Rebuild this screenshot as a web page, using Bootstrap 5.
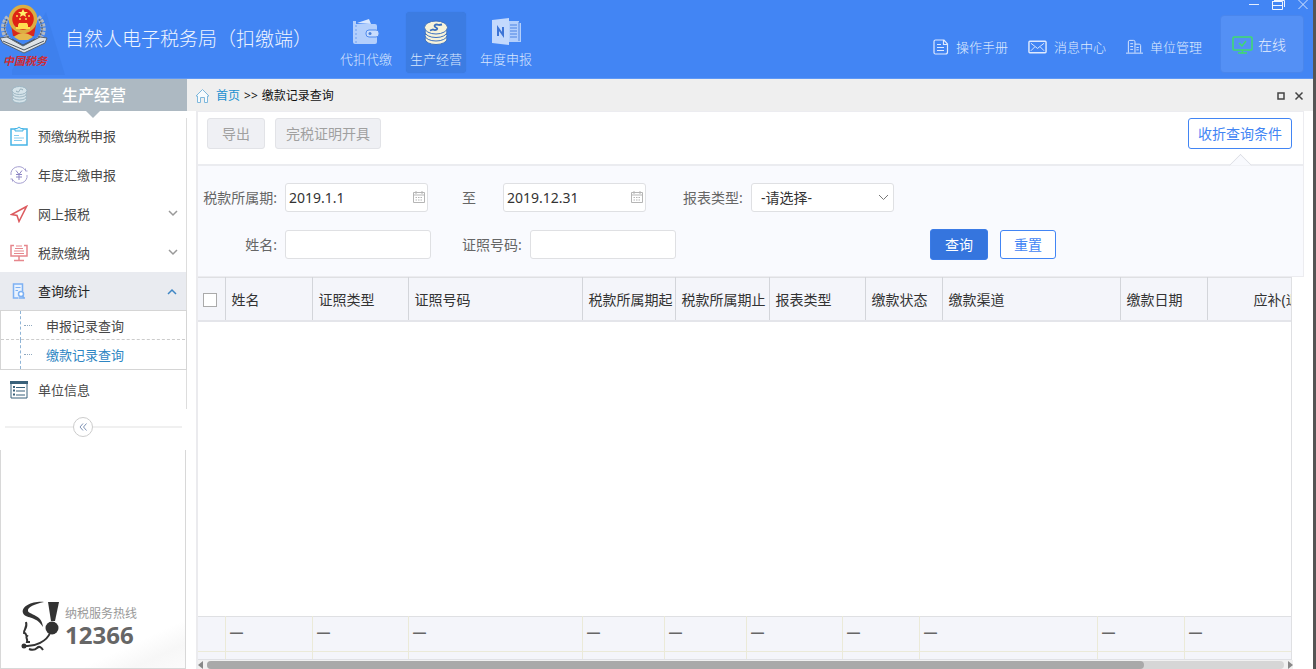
<!DOCTYPE html>
<html lang="zh-CN">
<head>
<meta charset="utf-8">
<meta name="viewport" content="width=device-width, initial-scale=1">
<title>自然人电子税务局（扣缴端）</title>
<link href="https://cdn.jsdelivr.net/npm/bootstrap@5.3.0/dist/css/bootstrap.min.css" rel="stylesheet">
<style>
  body { font-family: "Noto Sans", "Noto Sans CJK SC", sans-serif; font-size: 14px; line-height: 20px; color: #333; background: #fff; }
  a { text-decoration: none; color: inherit; }
  svg { display: block; flex-shrink: 0; }
  .app-frame { border-right: 3px solid #555; overflow: hidden; }

  /* top bar */
  .top-bar { height: 79px; background: #4285f4; color: #d5e4fd; position: relative; border-bottom: 1px solid #5e98f6; }
  .brand-mark { width: 65px; height: 78px; }
  .brand-title { font-size: 19px; line-height: 28px; font-weight: 300; width: 271px; color: #eef4ff; margin: 0; white-space: nowrap; }
  .module-nav { gap: 10px; padding-top: 6px; }
  .module-link { width: 60px; height: 61px; border-radius: 4px; font-size: 13px; font-weight: 300; padding-top: 5px; color: #d9e7fe; white-space: nowrap; }
  .module-link.active { background: #3c7ce2; box-shadow: 0 0 1px #3874d6; }
  .tool-nav { gap: 20px; padding-top: 15px; margin-right: 18px; }
  .tool-link { font-size: 13px; font-weight: 300; gap: 7px; color: #dfeafe; white-space: nowrap; }
  .status-btn { width: 84px; height: 58px; border: 1px solid #4a86ec; border-radius: 4px; background: #5490f5; color: #e6effe; font-size: 14px; font-weight: 300; gap: 5px; padding: 2px 0 0 11px; margin: 9px 9px 0 0; }
  .window-keys { position: absolute; top: 0; right: 4px; gap: 11px; }
  .bare-btn { border: 0; background: none; padding: 0; color: inherit; }

  /* side menu */
  .side-menu { width: 187px; flex-shrink: 0; }
  .side-head { height: 32px; background: #adb9c2; color: #fff; font-size: 16px; font-weight: 500; position: relative; padding-left: 11px; }
  .side-head::after { content: ""; position: absolute; left: 86px; top: 32px; border: 7px solid transparent; border-top-color: #adb9c2; border-bottom: 0; }
  .side-title { padding-right: 27px; }
  .side-list { padding-top: 5px; font-size: 13px; color: #484848; background: linear-gradient(#ddd, #ddd) right 0 top 7px / 1px 100% no-repeat; }
  .side-link { height: 39px; padding: 0 9px 0 10px; gap: 10px; }
  .side-link.active { background: #e9ebf0; color: #222; height: 38px; margin-right: 1px; }
  .sub-list { border: 1px solid #d5d5d5; height: 60px; padding-left: 19px; position: relative; }
  .sub-link { height: 29px; padding-left: 25px; border-left: 1px dashed #8fb4d6; position: relative; }
  .sub-link.active { color: #2e86c3; }
  .sub-link::before { content: ""; position: absolute; left: 3px; top: 14px; width: 8px; border-top: 1px dotted #8fa9c0; }
  .sub-list::after { content: ""; position: absolute; left: 0; right: 1px; top: 28px; border-top: 1px dashed #ccc; }
  .fold-row { height: 36px; padding: 0 5px; margin-bottom: 5px; }
  .fold-row hr { margin: 0; opacity: 1; border-top: 2px solid #f0f0f0; }
  .fold-lead { width: 68px; }
  .fold-btn { width: 20px; height: 20px; border: 1px solid #ccc; border-radius: 50%; background: #fff; padding: 0; color: #7f93b5; }
  .hotline-box { border: 1px solid #d8d8d8; border-top: 0; margin-right: 1px; padding: 0 0 15px 20px; background: linear-gradient(155deg, #fff 84%, #f7f7f7 92%, #fbfbfb 100%); }
  .hot-label { font-size: 12px; line-height: 16px; color: #999; }
  .hot-number { font-size: 24px; line-height: 26px; font-weight: 700; color: #666; font-family: "Noto Sans", sans-serif; }

  /* working area */
  .work-main { min-width: 0; }
  .tab-strip { height: 32px; background: #efefef; font-size: 12px; color: #111; padding: 2px 9px 0 8px; }
  .tab-strip a { color: #1b8fd0; }
  .crumbs { padding-left: 6px; }
  .work-pane { margin: 0 21px 0 9px; border-left: 2px solid #ebebee; }
  .pane-top { margin-right: -12px; border: 1px solid #ececf0; border-left: 0; }
  .action-bar { height: 54px; padding: 6px 11px 0 9px; gap: 10px; border-bottom: 2px solid #ebecf0; position: relative; }
  .action-bar::after { content: ""; position: absolute; right: 54px; bottom: -10px; width: 17px; height: 17px; background: #f9fafe; border: 1px solid #dcdde3; border-right: 0; border-bottom: 0; transform: rotate(45deg); clip-path: polygon(0 0, 100% 0, 0 100%); }
  .btn-app { height: 31px; padding: 0 18px; font-size: 14px; line-height: 20px; border-radius: 3px; margin: 0; }
  .btn-idle, .btn-idle:disabled { background: #eff0f4; border-color: #e2e3e7; color: #a0a0a0; opacity: 1; padding: 0 10px; min-width: 58px; }
  .btn-line { background: #fff; border-color: #4285f4; color: #4285f4; padding: 0 9px; }
  .btn-reset { height: 29px; width: 56px; padding: 0; }
  .btn-solid { background: #3575de; border-color: #3b7be6; color: #fff; width: 58px; padding: 0; }
  .query-area { background: #f9fafe; padding: 16px 0 16px; color: #666; }
  .query-row { height: 31px; white-space: nowrap; }
  .query-row + .query-row { margin-top: 16px; }
  .lead-label { width: 87px; padding-right: 8px; text-align: right; }
  .box-input { height: 29px; border: 1px solid #dfe0e3; border-radius: 3px; padding: 0 3px; font-size: 14px; color: #333; background-color: #fff; }
  .date-wrap { position: relative; width: 143px; }
  .date-wrap svg { position: absolute; right: 3px; top: 8px; }
  .name-input { width: 146px; }
  .till-label { width: 75px; padding-left: 34px; }
  .code-label { width: 99px; padding-left: 31px; }
  .kind-label { width: 105px; padding-left: 37px; }
  .kind-select { width: 143px; padding: 0 24px 0 9px; background-position: right 4px center; background-size: 11px 7px; background-image: url("data:image/svg+xml,%3Csvg xmlns='http://www.w3.org/2000/svg' viewBox='0 0 11 7'%3E%3Cpath d='M1 1L5.500 5.500L10 1' fill='none' stroke='%23777'/%3E%3C/svg%3E"); }
  .query-keys { margin-left: 254px; gap: 12px; }

  /* grid of records */
  .grid-clip { overflow: hidden; border-right: 1px solid #dfe0e3; }
  .grid-table { table-layout: fixed; width: 1141px; margin: 0; font-size: 14px; }
  .grid-table > :not(caption) > * > * { background: #f4f5fa; padding: 0 6px 0 6px; border: 0 solid #d3d5da; border-right-width: 1px; font-weight: 400; color: #333; vertical-align: middle; white-space: nowrap; box-shadow: none; }
  .grid-table > :not(caption) > * > :first-child { padding-left: 5px; }
  .head-table { border-top: 1px solid #dfe0e3; }
  .head-table > thead > tr > th { height: 43px; border-bottom: 2px solid #e4e5ea; padding-top: 2px; }
  .foot-table > tbody > tr > td { height: 35px; border-color: #ebead8; border-bottom-width: 1px; color: #666; padding: 0 0 5px 4px; font-weight: 700; }
  .foot-table > tbody > tr.thin-row > td { height: 8px; padding: 0; border-bottom-color: #e0e1e5; }
  .foot-table { border-top: 1px solid #dfe0e3; }
  .c27 { width: 27px; } .c77 { width: 77px; } .c82 { width: 82px; } .c87 { width: 87px; } .c93 { width: 93px; } .c94 { width: 94px; }
  .c96 { width: 96px; } .c174 { width: 174px; } .c178 { width: 178px; }
  .grid-check[type=checkbox] { width: 14px; height: 14px; margin: 0; border: 1px solid #aaa; border-radius: 0; display: block; }
  .grid-space { min-height: 80px; }
  .h-scroll { height: 9px; background: #f1f1f1; gap: 4px; margin-right: -1px; }
  .h-track { height: 8px; border-radius: 4px; background: #d6d6d6; }
  .h-thumb { height: 8px; border-radius: 4px; background: #a9a9a9; }
</style>
</head>
<body>
<div class="app-frame d-flex flex-column min-vh-100">
  <header class="top-bar d-flex align-items-center">
    <svg class="brand-mark" viewBox="0 0 65 78" role="img" aria-label="中国税务">
      <path d="M12 70L46 12L65 75H12Z" fill="#3e80ed"/>
      <g fill="none" stroke="#b4bac2" stroke-width="5" stroke-dasharray="3 1">
        <path d="M8 17C-1 28 4 40 18 45"/><path d="M38 17C48 28 43 40 29 45"/>
      </g>
      <g fill="none" stroke="#5c6670" stroke-width="1.500" stroke-dasharray="2 1"><path d="M7 19C1 30 7 38 16 43M39 19C46 30 40 38 31 43"/></g>
      <path d="M11 25L13 36H34L36 25Z" fill="#d8281c"/>
      <path d="M14 37Q23 29 33 37L28 40H19Z" fill="#e6b84c"/>
      <path d="M0 38L7 37L23 46L40 37L47 38L45 43L24 53L3 43Z" fill="#dfe3e7" stroke="#59636e"/>
      <path d="M3 41L24 50L44 41M12 39L23 45L35 39" fill="none" stroke="#4b555f"/>
      <circle cx="23" cy="19" r="12.500" fill="#de2214" stroke="#dcae42" stroke-width="3.500"/>
      <path d="M23 9L24.500 12H28L25.200 14L26.200 17L23 15.200L19.800 17L20.800 14L18 12H21.500Z" fill="#fff06a"/>
      <g fill="#ffdd50"><circle cx="17" cy="16" r="1"/><circle cx="29" cy="16" r="1"/><circle cx="20" cy="19" r="1"/><circle cx="26" cy="19" r="1"/><path d="M18 25L19 23H27L28 25V27H30V29H16V27H18Z"/></g>
      <text x="3" y="65" font-size="11" font-weight="700" font-style="italic" fill="#d02b32" font-family="'Noto Sans CJK SC',serif">中国税务</text>
    </svg>
    <h1 class="brand-title">自然人电子税务局（扣缴端）</h1>
    <nav class="module-nav d-flex" aria-label="模块">
      <a href="#" class="module-link d-flex flex-column align-items-center">
        <svg width="30" height="32" viewBox="0 0 30 32"><path d="M6 6L18 2L20 7" fill="#d9e7fe"/><path d="M2 4H5V7H24Q26 7 26 9V25Q26 27 24 27H4Q2 27 2 25Z" fill="#b3cffc"/><path d="M5 8V26" stroke="#6e9ff0" stroke-dasharray="2 2"/><rect x="15" y="13" width="13" height="7" rx="3" fill="#c9ddfd" stroke="#4f8bee"/><circle cx="19" cy="16.500" r="1.500" fill="#4a80d8"/></svg>
        <span>代扣代缴</span>
      </a>
      <a href="#" class="module-link active d-flex flex-column align-items-center" aria-current="page">
        <svg width="30" height="32" viewBox="0 0 30 32"><g fill="#f7f3da" stroke="#3c70c0" stroke-width="1"><ellipse cx="15" cy="22" rx="11" ry="5.500"/><ellipse cx="15" cy="18.500" rx="11" ry="5.500"/><ellipse cx="15" cy="15" rx="11" ry="5.500"/><ellipse cx="15" cy="10.500" rx="11.500" ry="6.500"/></g><path d="M21 7.500L18 8C14 6.500 12 9 15 10.500C18 11.500 15 14 12 12.500L9 13.500" fill="none" stroke="#3a6fbe" stroke-width="1.800"/></svg>
        <span>生产经营</span>
      </a>
      <a href="#" class="module-link d-flex flex-column align-items-center">
        <svg width="32" height="32" viewBox="0 0 32 32"><path d="M18 4H29V6H31V25H18" fill="#b3cffc"/><path d="M20 8H27M20 11H27M20 14H27M20 17H27M20 20H27M29 5V24" stroke="#4a83e4" stroke-width="1"/><path d="M2 3L19 1V28L2 26Z" fill="#c3d9fd"/><path d="M8 19V11L13 18V10" fill="none" stroke="#3c74d6" stroke-width="2"/></svg>
        <span>年度申报</span>
      </a>
    </nav>
    <nav class="tool-nav d-flex align-items-center ms-auto" aria-label="工具">
      <a href="#" class="tool-link d-flex align-items-center"><svg width="16" height="16" viewBox="0 0 16 16" fill="none" stroke="currentColor"><path d="M2.500 1H11L14.500 5V13Q14.500 15 12.500 15H2.500Q1 15 1 13.500V2.500Q1 1 2.500 1ZM10.500 1V5.500H14.500M4 5.500H8M4 8.500H11M4 11.500H11" stroke-width="1.200"/></svg>操作手册</a>
      <a href="#" class="tool-link d-flex align-items-center"><svg width="19" height="16" viewBox="0 0 20 16" fill="none" stroke="currentColor"><rect x="1" y="2" width="18" height="12" rx="1" stroke-width="1.500"/><path d="M3 4L10 9.500L17 4M3 12L7 8M17 12L13 8"/></svg>消息中心</a>
      <a href="#" class="tool-link d-flex align-items-center"><svg width="17" height="16" viewBox="0 0 18 16" fill="none" stroke="currentColor"><path d="M0 14.500H18M2.500 14V2.500Q2.500 1 4 1H8Q9.500 1 9.500 2.500V14M9.500 5H14Q15.500 5 15.500 6.500V14M4.500 4.500H7.500M4.500 7.500H7.500M4.500 10.500H7.500M11 8.500H13.500M11 11H13.500"/></svg>单位管理</a>
    </nav>
    <button type="button" class="status-btn d-flex align-items-center"><svg width="21" height="18" viewBox="0 0 21 18" fill="none" stroke="#3fdc6c" stroke-width="1.500"><rect x="1" y="1" width="19" height="13" rx="1"/><path d="M10.500 14V16.500M6 17H15M7 7L10 10L14 5"/></svg>在线</button>
    <div class="window-keys d-flex">
      <button type="button" class="bare-btn" aria-label="最小化"><svg width="12" height="10" viewBox="0 0 12 10"><path d="M1 4.500H11" stroke="#e3edfe"/></svg></button>
      <button type="button" class="bare-btn" aria-label="还原"><svg width="15" height="10" viewBox="0 0 15 10" fill="none" stroke="#eef4ff"><path d="M3 0.500H13.500V7M1 1.500H11.500V9.500H1.500V1.500M1 5.500H11"/></svg></button>
      <button type="button" class="bare-btn" aria-label="关闭"><svg width="12" height="10" viewBox="0 0 12 10"><path d="M1.500 0L10.500 9M10.500 0L1.500 9" stroke="#d5e4fd"/></svg></button>
    </div>
  </header>

  <div class="d-flex flex-grow-1">
    <aside class="side-menu d-flex flex-column">
      <div class="side-head d-flex align-items-center">
        <svg width="17" height="18" viewBox="0 0 17 18"><g fill="#d5e3e9" stroke="#9db6c3"><ellipse cx="8.500" cy="13.500" rx="7" ry="3.500"/><ellipse cx="8.500" cy="10.500" rx="7" ry="3.500"/><ellipse cx="8.500" cy="7.500" rx="7" ry="3.500"/><ellipse cx="8.500" cy="4.500" rx="7.500" ry="4"/></g><path d="M5 5Q8 7 8.500 4.500T12 4" fill="none" stroke="#8fa9b6"/></svg>
        <span class="side-title flex-grow-1 text-center">生产经营</span>
      </div>
      <nav class="side-list" aria-label="菜单">
        <a href="#" class="side-link d-flex align-items-center"><svg width="18" height="20" viewBox="0 0 18 20" fill="none" stroke="#45b4e6"><path d="M1 3H17V19H1Z" stroke-width="1.500"/><path d="M5 5V2.500H7Q9 -0.500 11 2.500H13V5Z" fill="#dff3fc"/><path d="M4 9.500H9M4 12H14M4 14.500H12" stroke="#86cdef"/></svg><span>预缴纳税申报</span></a>
        <a href="#" class="side-link d-flex align-items-center"><svg width="18" height="18" viewBox="0 0 18 18" fill="none" stroke="#a59fd0"><path d="M1 6.500A8 8 0 0 1 15.500 4.500M17 11.500A8 8 0 0 1 2.500 13.500M1 9V6.500M17 9V11.500M15.500 2.500V5H17.500M2.500 15.500V13H0.500"/><path d="M6 4.500L9 8.500L12 4.500M9 8.500V14M6 8.500H12M6 11H12" stroke="#8d86c4"/></svg><span>年度汇缴申报</span></a>
        <a href="#" class="side-link d-flex align-items-center"><svg width="18" height="18" viewBox="0 0 18 18" fill="none" stroke="#dc5a5e" stroke-width="1.500"><path d="M16.500 1.500L1.500 9.500L7 10.500L9 16.500Z"/></svg><span class="flex-grow-1">网上报税</span><svg width="10" height="7" viewBox="0 0 10 7"><path d="M1 1L5 5L9 1" fill="none" stroke="#999" stroke-width="1.500"/></svg></a>
        <a href="#" class="side-link d-flex align-items-center"><svg width="18" height="18" viewBox="0 0 18 18" fill="none" stroke="#e6878d"><path d="M4 1.500H1V12H17V1.500H14M9 12V16.500M4 16.500H14" stroke-width="1.500"/><path d="M6 2H12M5 4.500H13M4 7H14M4 9.500H14"/></svg><span class="flex-grow-1">税款缴纳</span><svg width="10" height="7" viewBox="0 0 10 7"><path d="M1 1L5 5L9 1" fill="none" stroke="#999" stroke-width="1.500"/></svg></a>
        <a href="#" class="side-link active d-flex align-items-center"><svg width="18" height="16" viewBox="0 0 18 16" fill="none" stroke="#7db1f3"><path d="M8 15H3.500V1H12.500V8" fill="#e9f2fe" stroke-width="1.500"/><path d="M5.500 4.500H10.500M5.500 7.500H8"/><circle cx="11" cy="11" r="2.500" fill="#fff" stroke-width="1.500"/><path d="M12.500 13L14.500 15.500M8.500 15H15" stroke-width="1.500"/></svg><span class="flex-grow-1">查询统计</span><svg width="10" height="7" viewBox="0 0 10 7"><path d="M1 6L5 2L9 6" fill="none" stroke="#3f86c4" stroke-width="1.500"/></svg></a>
        <div class="sub-list">
          <a href="#" class="sub-link d-flex align-items-center">申报记录查询</a>
          <a href="#" class="sub-link active d-flex align-items-center" aria-current="page">缴款记录查询</a>
        </div>
        <a href="#" class="side-link d-flex align-items-center"><svg width="18" height="18" viewBox="0 0 18 18" fill="none" stroke="#39617a"><path d="M1 1H17V17H1Z"/><path d="M0 1.500H18" stroke-width="3"/><path d="M3 6H5M3 9.500H5M3 13.500H5" stroke-width="2"/><path d="M6 6.500H15M6 10H15M6 14H15"/></svg><span>单位信息</span></a>
      </nav>
      <div class="fold-row d-flex align-items-center"><hr class="fold-lead"><button type="button" class="fold-btn d-flex align-items-center justify-content-center" aria-label="收起菜单"><svg width="8" height="8" viewBox="0 0 8 8" fill="none" stroke="currentColor"><path d="M4 0.500L1 4L4 7.500M7.500 0.500L4.500 4L7.500 7.500"/></svg></button><hr class="flex-grow-1"></div>
      <div class="hotline-box flex-grow-1 d-flex align-items-end">
        <div class="d-flex align-items-center">
          <svg width="44" height="52" viewBox="0 0 44 52"><path d="M23 1C12 0 0 5 2 12C4 18 15 14 22 26C21 13 8 14 7 10C6 6 14 3 23 1Z" fill="#333"/><path d="M27 1H38L34 20H30Z" fill="#333"/><circle cx="31" cy="27" r="6.500" fill="#333"/><path d="M29 32C26 40 14 46 4 45" fill="none" stroke="#333" stroke-width="2"/><path d="M5 21C7 27 2 29 3 32C6 32 4 34 6 35C4 37 7 37 6 41H9" fill="none" stroke="#333" stroke-width="2"/><circle cx="3" cy="45" r="2.500" fill="#333"/><path d="M8 48Q13 50 16 47T22 49" fill="none" stroke="#333" stroke-width="2"/></svg>
          <div><div class="hot-label">纳税服务热线</div><div class="hot-number">12366</div></div>
        </div>
      </div>
    </aside>

    <main class="work-main flex-grow-1 d-flex flex-column">
      <div class="tab-strip d-flex align-items-center">
        <svg width="15" height="16" viewBox="0 0 15 16" fill="#f7fbfe" stroke="#7fb8dc"><path d="M1 8L7.500 1.500L14 8H12.500V14.500H9.500V9.500H5.500V14.500H2.500V8Z"/></svg>
        <nav class="crumbs" aria-label="位置"><a href="#">首页</a><span class="mx-1">&gt;&gt;</span><span>缴款记录查询</span></nav>
        <button type="button" class="bare-btn ms-auto me-2" aria-label="最大化"><svg width="10" height="10" viewBox="0 0 10 10"><rect x="2" y="2" width="6" height="6" fill="none" stroke="#444" stroke-width="1.500"/></svg></button>
        <button type="button" class="bare-btn" aria-label="关闭标签"><svg width="10" height="10" viewBox="0 0 10 10"><path d="M1.500 1.500L8.500 8.500M8.500 1.500L1.500 8.500" stroke="#444" stroke-width="1.500"/></svg></button>
      </div>
      <div class="work-pane flex-grow-1 d-flex flex-column">
        <section class="pane-top">
          <div class="action-bar d-flex align-items-start">
            <button type="button" class="btn btn-app btn-idle" disabled>导出</button>
            <button type="button" class="btn btn-app btn-idle" disabled>完税证明开具</button>
            <button type="button" class="btn btn-app btn-line ms-auto">收折查询条件</button>
          </div>
          <form class="query-area" onsubmit="return false">
            <div class="query-row d-flex align-items-center">
              <label class="lead-label" for="from">税款所属期:</label>
              <div class="date-wrap"><input id="from" class="box-input w-100" type="text" value="2019.1.1"><svg width="12" height="12" viewBox="0 0 12 12" fill="none" stroke="#b5b5b5"><path d="M0.500 1.500H11.500V11.500H0.500ZM0.500 4H11.500M3 0V3M9 0V3"/><path d="M2.500 6.500H10M2.500 9H10" stroke-dasharray="1.500 1"/></svg></div>
              <label class="till-label" for="till">至</label>
              <div class="date-wrap"><input id="till" class="box-input w-100" type="text" value="2019.12.31"><svg width="12" height="12" viewBox="0 0 12 12" fill="none" stroke="#b5b5b5"><path d="M0.500 1.500H11.500V11.500H0.500ZM0.500 4H11.500M3 0V3M9 0V3"/><path d="M2.500 6.500H10M2.500 9H10" stroke-dasharray="1.500 1"/></svg></div>
              <label class="kind-label" for="kind">报表类型:</label>
              <select id="kind" class="form-select box-input kind-select"><option>-请选择-</option></select>
            </div>
            <div class="query-row d-flex align-items-center">
              <label class="lead-label" for="person">姓名:</label>
              <input id="person" class="box-input name-input" type="text">
              <label class="code-label" for="code">证照号码:</label>
              <input id="code" class="box-input name-input" type="text">
              <div class="query-keys d-flex align-items-center">
                <button type="submit" class="btn btn-app btn-solid">查询</button>
                <button type="reset" class="btn btn-app btn-line btn-reset">重置</button>
              </div>
            </div>
          </form>
        </section>
        <div class="grid-clip">
          <table class="table grid-table head-table">
            <colgroup><col class="c27"><col class="c87"><col class="c96"><col class="c174"><col class="c93"><col class="c94"><col class="c96"><col class="c77"><col class="c178"><col class="c87"><col></colgroup>
            <thead><tr>
              <th><input type="checkbox" class="form-check-input grid-check" aria-label="全选"></th>
              <th>姓名</th><th>证照类型</th><th>证照号码</th><th>税款所属期起</th><th>税款所属期止</th><th>报表类型</th><th>缴款状态</th><th>缴款渠道</th><th>缴款日期</th><th class="text-end">应补(退)税额</th>
            </tr></thead>
          </table>
        </div>
        <div class="grid-clip grid-space flex-grow-1"></div>
        <div class="grid-clip">
          <table class="table grid-table foot-table">
            <colgroup><col class="c27"><col class="c87"><col class="c96"><col class="c174"><col class="c82"><col class="c82"><col class="c96"><col class="c77"><col class="c178"><col class="c87"><col></colgroup>
            <tbody>
              <tr><td></td><td>—</td><td>—</td><td>—</td><td>—</td><td>—</td><td>—</td><td>—</td><td>—</td><td>—</td><td>—</td></tr>
              <tr class="thin-row"><td></td><td></td><td></td><td></td><td></td><td></td><td></td><td></td><td></td><td></td><td></td></tr>
            </tbody>
          </table>
        </div>
        <div class="h-scroll d-flex align-items-center">
          <svg width="5" height="8" viewBox="0 0 5 8"><path d="M5 0V8L0 4Z" fill="#888"/></svg>
          <div class="h-track flex-grow-1"><div class="h-thumb" style="width:87%"></div></div>
          <svg width="5" height="8" viewBox="0 0 5 8"><path d="M0 0V8L5 4Z" fill="#888"/></svg>
        </div>
      </div>
    </main>
  </div>
</div>
<script src="https://cdn.jsdelivr.net/npm/bootstrap@5.3.0/dist/js/bootstrap.bundle.min.js"></script>
</body>
</html>
